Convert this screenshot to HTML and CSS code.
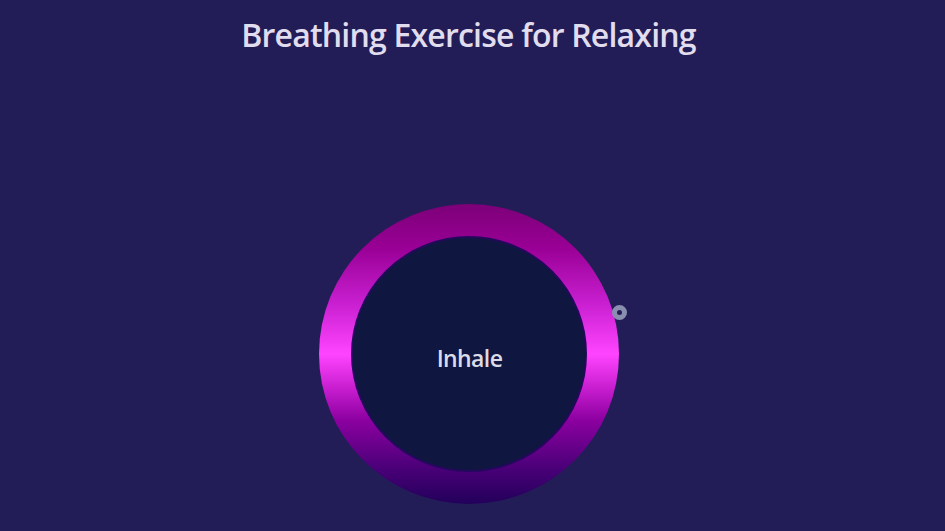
FILE: index.html
```html
<!DOCTYPE html>
<html>
<head>
<meta charset="utf-8">
<link rel="stylesheet" href="styles.css">
</head>
<body>
<main class="page">
  <h1 class="title">Breathing Exercise for Relaxing</h1>
  <div class="stage">
    <div class="ring">
      <div class="core"><span class="label">Inhale</span></div>
      <span class="pointer"></span>
    </div>
  </div>
</main>
</body>
</html>
```
FILE: styles.css
```css
html, body {
  margin: 0;
  padding: 0;
  background: #221d57;
  height: 100%;
}
.page {
  box-sizing: border-box;
  height: 531px;
  padding-right: 8px;
  display: flex;
  flex-direction: column;
  align-items: center;
  font-family: "Open Sans", "Noto Sans", sans-serif;
  color: #e1ddef;
}
.title {
  margin: 15px 0 0;
  font-size: 32px;
  font-weight: 600;
  line-height: 40px;
  letter-spacing: -0.8px;
}
.stage {
  margin-top: 149px;
  display: flex;
  justify-content: center;
}
.ring {
  position: relative;
  width: 300px;
  height: 300px;
  border-radius: 50%;
  background: linear-gradient(180deg, #7c0078 0%, #9a0096 15%, #c81fd0 33%, #ff44ff 50%, #c51ccd 62%, #8c00a0 72%, #4a0078 88%, #22005a 100%);
  display: flex;
  align-items: center;
  justify-content: center;
}
.core {
  box-sizing: border-box;
  width: 236px;
  height: 236px;
  border-radius: 50%;
  background: #0f1740;
  border: 2px solid #24085c;
  display: flex;
  align-items: center;
  justify-content: center;
}
.label {
  font-size: 23px;
  font-weight: 600;
  color: #dcdbe8;
  margin-top: 8px;
  margin-left: 2px;
  letter-spacing: -0.6px;
}
.pointer {
  position: absolute;
  left: 293px;
  top: 101px;
  box-sizing: border-box;
  width: 15px;
  height: 15px;
  border-radius: 50%;
  border: 5px solid #8a8fb0;
  background: #221d57;
}
```
